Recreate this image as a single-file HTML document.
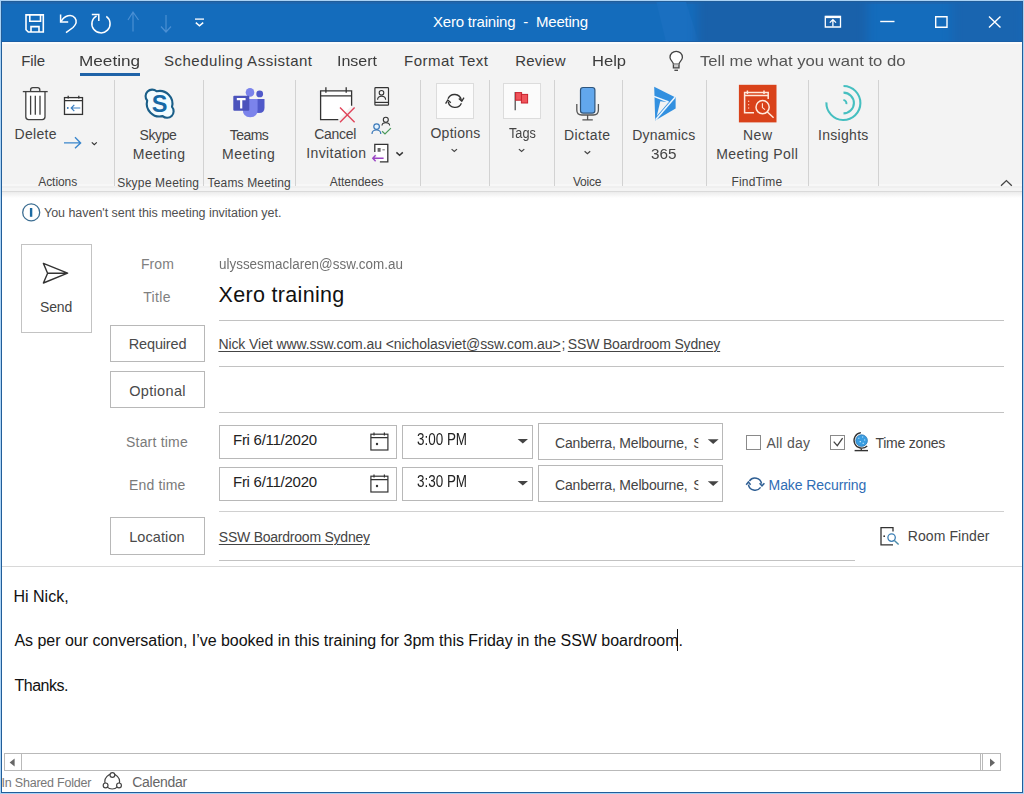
<!DOCTYPE html>
<html><head><meta charset="utf-8">
<style>
html,body{margin:0;padding:0;}
body{width:1024px;height:794px;position:relative;overflow:hidden;background:#a9d2f5;font-family:"Liberation Sans",sans-serif;}
.a{position:absolute;}
.t{position:absolute;white-space:pre;line-height:normal;font-family:"Liberation Sans",sans-serif;}
.ul{text-decoration:underline;text-underline-offset:1.5px;text-decoration-thickness:1px;}
.win{position:absolute;left:1px;top:1px;width:1022px;height:792px;box-sizing:border-box;border:1px solid #215d99;background:#fff;overflow:hidden;}
.hl{position:absolute;height:1px;background:#c2c2c2;}
.vl{position:absolute;width:1px;background:#d2d2d2;}
.box{position:absolute;box-sizing:border-box;border:1px solid #b8b8b8;background:#fff;}
svg{position:absolute;overflow:visible;}
.clip1{clip-path:inset(-5px 0 -5px 0);}
</style></head><body>
<div class="win"></div>
<!-- title bar -->
<div class="a" style="left:2px;top:2px;width:1020px;height:40px;background:#146cbc;"></div>
<div class="a" style="left:2px;top:1px;width:1020px;height:1px;background:#215d99;"></div>
<div class="a" style="left:2px;top:2px;width:1020px;height:2px;background:#1c66b0;"></div>
<div class="a" style="left:2px;top:41px;width:1020px;height:1px;background:#1a5fa6;"></div>
<div class="a" style="left:2px;top:2px;width:1020px;height:39px;overflow:hidden;">
<div class="a" style="left:652px;top:-10px;width:48px;height:60px;background:#1a6fc0;clip-path:polygon(0 0,60% 0,100% 100%,30% 100%);filter:blur(3px);"></div>
<div class="a" style="left:695px;top:-10px;width:170px;height:60px;background:#1961aa;filter:blur(5px);"></div>
<div class="a" style="left:950px;top:-10px;width:72px;height:60px;background:#1965b0;filter:blur(5px);"></div>
</div>
<div class="a" style="left:2px;top:41px;width:1020px;height:1px;background:#1a5fa6;"></div>
<!-- tab row + ribbon -->
<div class="a" style="left:2px;top:42px;width:1020px;height:149px;background:#f3f3f3;"></div>
<div class="a" style="left:2px;top:42px;width:1020px;height:2px;background:#fbfbfb;"></div>
<div class="a" style="left:2px;top:191px;width:1020px;height:1px;background:#dadada;"></div>
<div class="a" style="left:2px;top:184px;width:1020px;height:2px;background:#f7f7f7;"></div>
<div class="a" style="left:2px;top:186px;width:1020px;height:2px;background:#efefef;"></div>
<div class="a" style="left:2px;top:188px;width:1020px;height:3px;background:#f4f4f4;"></div>
<div class="a" style="left:2px;top:192px;width:1020px;height:6px;background:linear-gradient(#ececec,#ffffff);"></div>
<!-- Meeting tab underline -->
<div class="a" style="left:80px;top:73px;width:60px;height:3px;background:#1f63a8;"></div>
<!-- ribbon separators -->
<div class="vl" style="left:114px;top:80px;height:106px;"></div>
<div class="vl" style="left:203px;top:80px;height:106px;"></div>
<div class="vl" style="left:295px;top:80px;height:106px;"></div>
<div class="vl" style="left:420px;top:80px;height:106px;"></div>
<div class="vl" style="left:489px;top:80px;height:106px;"></div>
<div class="vl" style="left:554px;top:80px;height:106px;"></div>
<div class="vl" style="left:622px;top:80px;height:106px;"></div>
<div class="vl" style="left:706px;top:80px;height:106px;"></div>
<div class="vl" style="left:808px;top:80px;height:106px;"></div>
<div class="vl" style="left:878px;top:80px;height:106px;"></div>
<!-- option/tags boxes -->
<div class="box" style="left:436px;top:83px;width:38px;height:36px;border-color:#dcdcdc;background:#fbfbfb;"></div>
<div class="box" style="left:503px;top:83px;width:38px;height:36px;border-color:#dcdcdc;background:#fbfbfb;"></div>

<!-- form: send button -->
<div class="box" style="left:21px;top:244px;width:71px;height:89px;border-color:#c3c3c3;"></div>
<!-- form lines -->
<div class="hl" style="left:219px;top:320px;width:785px;"></div>
<div class="box" style="left:110px;top:325px;width:95px;height:37px;"></div>
<div class="hl" style="left:219px;top:366px;width:785px;"></div>
<div class="box" style="left:110px;top:371px;width:95px;height:37px;"></div>
<div class="hl" style="left:219px;top:412px;width:785px;"></div>
<!-- date/time boxes -->
<div class="box" style="left:219px;top:425px;width:178px;height:34px;"></div>
<div class="box" style="left:402px;top:425px;width:131px;height:34px;"></div>
<div class="box" style="left:538px;top:423px;width:185px;height:37px;"></div>
<div class="box" style="left:219px;top:467px;width:178px;height:34px;"></div>
<div class="box" style="left:402px;top:467px;width:131px;height:34px;"></div>
<div class="box" style="left:538px;top:465px;width:185px;height:37px;"></div>
<!-- checkboxes -->
<div class="box" style="left:746px;top:435px;width:15px;height:15px;border-color:#8a8a8a;"></div>
<div class="box" style="left:830px;top:435px;width:15px;height:15px;border-color:#8a8a8a;"></div>
<div class="hl" style="left:219px;top:511px;width:785px;background:#d0d0d0;"></div>
<div class="box" style="left:110px;top:517px;width:95px;height:38px;"></div>
<div class="hl" style="left:219px;top:560px;width:636px;"></div>
<div class="hl" style="left:2px;top:566px;width:1020px;background:#d8d8d8;"></div>

<!-- scrollbar -->
<div class="a" style="left:4px;top:753px;width:997px;height:18px;box-sizing:border-box;border:1px solid #b9b9b9;background:#fff;"></div>
<div class="a" style="left:21px;top:753px;width:1px;height:18px;background:#b9b9b9;"></div>
<div class="a" style="left:980px;top:753px;width:1px;height:18px;background:#b9b9b9;"></div>
<div class="a" style="left:982px;top:753px;width:1px;height:18px;background:#b9b9b9;"></div>


<!-- QAT icons -->
<svg width="1024" height="45" style="left:0;top:0" fill="none" stroke="#fff" stroke-width="1.6">
 <path d="M26 14.9 H43.3 V32 H28.3 L26 29.7 Z"/>
 <path d="M29.8 14.9 V21.3 H40.5 V14.9"/>
 <path d="M31 32 V26.6 H39 V32"/>
 <path d="M60.6 14.6 V22 H68.2" stroke-width="1.5"/>
 <path d="M61.2 21.4 C 64.5 15.5, 71.5 13.5, 75 18 C 77.5 21.5, 75.5 25, 73 27.5 L 66 32.6" stroke-width="1.5"/>
 <path d="M106.3 16.4 A 9.1 9.1 0 1 1 96.6 15.8" stroke-width="1.5"/>
 <path d="M91.8 14.4 H98.8 V21" stroke-width="1.5"/>
 <g stroke="#4a8fd3" stroke-width="1.2"><path d="M133 12 V31.5 M128 20 L133 12 L138.5 20"/><path d="M166 15 V32 M161 26.5 L166 32 L171 26.5"/></g>
 <path d="M195 19.1 H204" stroke-width="1.3"/>
 <path d="M195.8 22.6 L199.5 25.8 L203.2 22.6" stroke-width="1.5"/>
 <!-- window controls -->
 <path d="M825.3 16.3 H840.5 V27 H825.3 Z" stroke-width="1.3"/>
 <path d="M825.3 17 H840.5" stroke-width="2.2"/>
 <path d="M832.9 26.5 V20 M829.8 22.6 L832.9 19.6 L836 22.6" stroke-width="1.3"/>
 <path d="M880.2 21.5 H894.5" stroke-width="1.4"/>
 <path d="M935.7 16.7 H947 V27.3 H935.7 Z" stroke-width="1.4"/>
 <path d="M989 16.5 L1000.5 27.5 M1000.5 16.5 L989 27.5" stroke-width="1.4"/>
</svg>


<!-- ribbon icons -->
<svg width="1024" height="200" style="left:0;top:0" fill="none" stroke="#404040" stroke-width="1.3">
 <!-- trash -->
 <path d="M25.8 91.6 V116.8 Q25.8 119.6 28.6 119.6 H42.2 Q45 119.6 45 116.8 V91.6" fill="#fff"/>
 <path d="M22.8 91.6 H47.7"/>
 <path d="M30.6 91.6 V89.8 Q30.6 87.6 32.8 87.6 H37.6 Q39.8 87.6 39.8 89.8 V91.6"/>
 <path d="M30.6 95.8 V114.8 M35.3 95.8 V114.8 M40 95.8 V114.8"/>
 <!-- calendar back -->
 <rect x="64.5" y="97.6" width="18" height="16.8" fill="#fff" stroke="#333"/>
 <path d="M64.5 100.6 H82.5 M68.2 95.8 V98.6 M78.8 95.8 V98.6" stroke="#333"/>
 <circle cx="67.8" cy="108" r="0.9" fill="#2f6fb0" stroke="none"/>
 <path d="M71.2 108 H80.3 M74.3 104.8 L71.2 108 L74.3 111.2" stroke="#3c7fc1" stroke-width="1.2"/>
 <!-- forward arrow -->
 <path d="M64 142.9 H80.4 M75 137.3 L80.6 142.9 L75 148.3" stroke="#3a86cc" stroke-width="1.4"/>
 <path d="M91.8 142.4 L94.3 144.6 L96.8 142.4" stroke="#333" stroke-width="1.2"/>
 <!-- skype -->
 <path d="M156.57 91.26 A 12.8 12.8 0 0 1 172 106.88 A 6.6 6.6 0 0 1 162.63 116.14 A 12.8 12.8 0 0 1 147.2 100.52 A 6.6 6.6 0 0 1 156.57 91.26 Z" fill="#f2fcff" stroke="#1a5e88" stroke-width="2.1" stroke-linejoin="round"/>
 <text x="159.7" y="111.6" text-anchor="middle" font-family="Liberation Sans" font-weight="bold" font-size="23.5" fill="#1569a6" stroke="none">S</text>
 <!-- teams -->
 <path d="M252 99 H264.5 V108 Q264.5 113 259 113 Q252 113 252 108 Z" fill="#5059c9" stroke="none"/>
 <circle cx="259.7" cy="93.9" r="3.4" fill="#5059c9" stroke="none"/>
 <path d="M242.8 99 H257.6 V109.6 Q257.6 117.2 250.2 117.2 Q242.8 117.2 242.8 109.6 Z" fill="#7b83eb" stroke="none"/>
 <circle cx="250" cy="92.4" r="4.3" fill="#7b83eb" stroke="none"/>
 <rect x="233.3" y="95.8" width="16" height="15" rx="1" fill="#4b53bc" stroke="none"/>
 <path d="M236.8 99.1 H245.6 M241.2 99.1 V108.6" stroke="#fff" stroke-width="2.2"/>
 <!-- cancel invitation -->
 <path d="M338.3 119.7 H320.6 V90.8 H351.6 V105.8" fill="#fff" stroke="#333"/>
 <path d="M320.6 95.9 H351.6 M325.9 87.2 V92.8 M346.2 87.2 V92.8" stroke="#333"/>
 <path d="M340 107.6 L354.6 122.3 M354.6 107.6 L340 122.3" stroke="#e0445a" stroke-width="1.4"/>
 <!-- address book -->
 <rect x="374.9" y="87.6" width="13.6" height="17.6" rx="0.8" stroke="#333" stroke-width="1.2"/>
 <path d="M374.9 102.4 H388.5" stroke="#333" stroke-width="1.2"/>
 <circle cx="381.5" cy="92.8" r="2.3" stroke="#333" stroke-width="1.1"/>
 <path d="M377.6 99.8 Q377.6 96.2 381.6 96.2 Q385.6 96.2 385.6 99.8" stroke="#333" stroke-width="1.1"/>
 <!-- check names -->
 <circle cx="385.8" cy="119.8" r="2.5" stroke="#333" stroke-width="1.1"/>
 <path d="M382 125.6 Q382 122.8 385.8 122.8 Q389.6 122.8 389.6 125.6" stroke="#333" stroke-width="1.1"/>
 <circle cx="376.6" cy="126.6" r="2.8" stroke="#3a78b8" stroke-width="1.2" fill="#e4f3ff"/>
 <path d="M372 134 Q372 130 376.4 130 Q380.8 130 380.8 134" stroke="#3a78b8" stroke-width="1.2"/>
 <path d="M382.1 131.2 L385 134 L390.9 128.1" stroke="#4a9a5a" stroke-width="1.2"/>
 <!-- response -->
 <path d="M374.8 152 V144.3 H387.8 V161.8 H379.9" stroke="#333" stroke-width="1.3" fill="#fff"/>
 <rect x="377.6" y="148" width="3" height="3.8" fill="#666" stroke="none"/>
 <path d="M382.4 149.8 H384.8" stroke="#888" stroke-width="1.2"/>
 <path d="M373 158.2 H383.6 M375.6 155.2 L372.8 158.2 L375.6 161.2" stroke="#9a44c4" stroke-width="1.4"/>
 <path d="M396.4 152.4 L399.6 155.2 L402.8 152.4" stroke="#333" stroke-width="1.5"/>
 <!-- options icon -->
 <path d="M448 98.8 A 7 7 0 0 1 461.3 100" stroke="#333" stroke-width="1.3"/>
 <path d="M461.4 103.2 A 7 7 0 0 1 448.2 102" stroke="#333" stroke-width="1.3"/>
 <path d="M458.8 98.4 L461.8 101.2 L464 97.6" stroke="#333" stroke-width="1.3"/>
 <path d="M450.8 102.8 L447.8 100 L445.6 103.6" stroke="#333" stroke-width="1.3"/>
 <path d="M451.6 149.1 L454.3 151.5 L457 149.1" stroke="#444" stroke-width="1.2"/>
 <!-- flag -->
 <path d="M515.2 92 V110.2" stroke="#444" stroke-width="1.2"/>
 <rect x="515.6" y="92.6" width="6" height="7.6" fill="#f0545b" stroke="#c8232e" stroke-width="1"/>
 <rect x="521.4" y="94.4" width="6.2" height="8.6" fill="#f0545b" stroke="#c8232e" stroke-width="1"/>
 <path d="M518.9 149.1 L521.6 151.5 L524.3 149.1" stroke="#444" stroke-width="1.2"/>
 <!-- mic -->
 <rect x="580.5" y="87.5" width="14.4" height="25.6" rx="2.6" fill="#62a7ec" stroke="#2e557c" stroke-width="1.2"/>
 <path d="M576.8 104 V110 Q576.8 115 581.8 115 H593.4 Q598.4 115 598.4 110 V104" stroke="#555" stroke-width="1.3"/>
 <path d="M587.6 115 V119.6 M582.4 119.8 H592.8" stroke="#555" stroke-width="1.3"/>
 <path d="M584.6 151.2 L587.4 153.8 L590.2 151.2" stroke="#444" stroke-width="1.2"/>
 <!-- dynamics -->
 <path d="M654.2 86.8 L675.6 97.4 V108.6 L655.2 120.6 Z" fill="#3290e0" stroke="none"/>
 <path d="M660.3 101.3 L668.6 102.2 L656.8 116 Z" fill="#f3f3f3" stroke="none"/>
 <path d="M654 96.4 L668.6 102" stroke="#eef7ff" stroke-width="1.5"/>
 <path d="M675 97.2 L655.6 119.8" stroke="#eef7ff" stroke-width="1.5"/>
 <!-- findtime -->
 <rect x="738.9" y="84.8" width="37.6" height="37.6" fill="#d9421a" stroke="none"/>
 <path d="M754 112.8 H744.6 V92.6 H768.2 V99" stroke="#ffe9dc" stroke-width="1.5"/>
 <path d="M744.6 95.4 H768.2 M747.4 90.6 V94 M764 90.6 V94" stroke="#ffe9dc" stroke-width="1.5"/>
 <path d="M748.6 100.8 V101.8 M748.6 104.2 V105.2 M748.6 107.6 V108.6" stroke="#ffe9dc" stroke-width="1.2"/>
 <circle cx="762.6" cy="107.2" r="6.6" stroke="#ffe9dc" stroke-width="1.5" fill="#d9421a"/>
 <path d="M767.4 112 L773.6 117.8" stroke="#ffe9dc" stroke-width="1.5"/>
 <path d="M762.4 103.2 V107.6 L765 109.6" stroke="#ffe9dc" stroke-width="1.1"/>
 <!-- insights -->
 <path d="M843.5 86 A 17 17 0 1 1 826.4 102.4" stroke="#45bfc0" stroke-width="2.1"/>
 <path d="M843.5 92.6 A 10.4 10.4 0 0 1 843.5 113.4" stroke="#45bfc0" stroke-width="2.1"/>
 <path d="M843.4 99.8 A 4 4 0 0 1 846.4 104.2" stroke="#45bfc0" stroke-width="1.9"/>
 <!-- collapse chevron -->
 <path d="M1001 185.8 L1006.4 180.6 L1011.8 185.8" stroke="#444" stroke-width="1.3"/>
 <!-- lightbulb -->
 <path d="M673.4 64.2 C 673.4 61.8, 670 60.2, 670 57.4 C 670 53.9, 672.8 51.4, 676.2 51.4 C 679.6 51.4, 682.4 53.9, 682.4 57.4 C 682.4 60.2, 679 61.8, 679 64.2 Z" stroke="#444" stroke-width="1.3" fill="#fff"/>
 <path d="M673.4 64.4 V67.8 H679 V64.4" stroke="#444" stroke-width="1.3" fill="#ccc"/>
 <path d="M674.4 70.3 H678" stroke="#444" stroke-width="1.3"/>
</svg>


<!-- form icons -->
<svg width="1024" height="794" style="left:0;top:0" fill="none" stroke="#333" stroke-width="1.3">
 <!-- info -->
 <circle cx="31.2" cy="212.4" r="8.5" stroke="#3d6e92" stroke-width="1.3"/>
 <path d="M31.1 208 V216.8" stroke="#1c6ba3" stroke-width="2.4"/>
 <!-- send -->
 <path d="M43.4 263.4 L67.6 273.2 L43.4 283 L47.6 273.2 Z M47.6 273.2 H67.6" stroke="#333" stroke-width="1.4" stroke-linejoin="round"/>
 <!-- date calendars -->
 <g id="cal1">
 <rect x="370.9" y="434.2" width="17" height="15.8" stroke="#333" stroke-width="1.2"/>
 <path d="M370.9 437.6 H387.9 M374 432.6 V435.6 M384.4 432.6 V435.6" stroke="#333" stroke-width="1.2"/>
 <circle cx="377" cy="444" r="1.2" fill="#333" stroke="none"/>
 </g>
 <use href="#cal1" y="42"/>
 <!-- dropdown triangles -->
 <path d="M517.6 439 H528 L522.8 443.6 Z" fill="#444" stroke="none"/>
 <path d="M517.6 481 H528 L522.8 485.6 Z" fill="#444" stroke="none"/>
 <path d="M707.8 439.3 H718.6 L713.2 444.1 Z" fill="#444" stroke="none"/>
 <path d="M707.8 481.3 H718.6 L713.2 486.1 Z" fill="#444" stroke="none"/>
 <!-- check -->
 <path d="M833.7 441.6 L837.3 445.6 L842.6 438.1" stroke="#444" stroke-width="1.3"/>
 <!-- globe -->
 <circle cx="861.6" cy="440.6" r="5.8" fill="#3a9de0" stroke="#2a78b8" stroke-width="0.8"/>
 <path d="M858.2 438.2 h1.2 M862 437 h1.2 M864 440 h1.2 M859.6 441.6 h1.4 M862.6 443.4 h1.2" stroke="#bfe6ff" stroke-width="1.1"/>
 <path d="M860.9 432.6 A 7.8 7.8 0 1 0 867.2 446" stroke="#333" stroke-width="1.3"/>
 <path d="M861.3 448.4 V450.4" stroke="#333" stroke-width="1.3"/>
 <path d="M854.6 450.6 H868" stroke="#333" stroke-width="1.4"/>
 <!-- recurring -->
 <path d="M749.4 481 A 6.8 6.8 0 0 1 761.6 483.6" stroke="#2f5f94" stroke-width="1.5"/>
 <path d="M760.6 487.4 A 6.8 6.8 0 0 1 748.4 484.6" stroke="#2f5f94" stroke-width="1.5"/>
 <path d="M759.6 483.2 L762 485.8 L764.4 483.2" stroke="#2f5f94" stroke-width="1.5"/>
 <path d="M746.2 484.8 L748.4 482 L750.6 484.8" stroke="#2f5f94" stroke-width="1.5"/>
 <!-- room finder -->
 <path d="M893 531.4 V527.6 H881 V544.8 H893" stroke="#333" stroke-width="1.3"/>
 <circle cx="884.2" cy="536.2" r="0.9" fill="#333" stroke="none"/>
 <circle cx="891.6" cy="537.6" r="3.7" stroke="#3c7fb5" stroke-width="1.3"/>
 <path d="M894.4 540.4 L898.6 544.6" stroke="#4a8aa8" stroke-width="1.4"/>
 <!-- scrollbar arrows -->
 <path d="M14.6 758.6 V766.4 L9.6 762.5 Z" fill="#666" stroke="none"/>
 <path d="M990 758.6 V766.8 L995 762.7 Z" fill="#666" stroke="none"/>
 <!-- share icon -->
 <circle cx="112.2" cy="781.6" r="7.4" stroke="#444" stroke-width="1.2"/>
 <circle cx="112.4" cy="775" r="2.4" fill="#fff" stroke="#444" stroke-width="1.2"/>
 <circle cx="105.6" cy="785.4" r="2.4" fill="#fff" stroke="#444" stroke-width="1.2"/>
 <circle cx="119" cy="785.4" r="2.4" fill="#fff" stroke="#444" stroke-width="1.2"/>
 <!-- caret -->
 <path d="M677.5 629 V651" stroke="#111" stroke-width="1"/>
</svg>

<!--ICONS-->

<span id="t0" class="t " style="left:433.00px;top:13.00px;font-size:15px;color:#ffffff;letter-spacing:-0.208px;">Xero training  -  Meeting</span>
<span id="t1" class="t " style="left:21.20px;top:51.80px;font-size:15px;color:#3b3b3b;letter-spacing:-0.067px;">File</span>
<span id="t2" class="t sx" style="left:78.80px;top:51.80px;font-size:15px;color:#3b3b3b;letter-spacing:0.000px;transform:scaleX(1.1446);transform-origin:0 0;">Meeting</span>
<span id="t3" class="t " style="left:164.00px;top:51.80px;font-size:15px;color:#3b3b3b;letter-spacing:0.505px;">Scheduling Assistant</span>
<span id="t4" class="t sx" style="left:337.20px;top:51.80px;font-size:15px;color:#3b3b3b;letter-spacing:0.000px;transform:scaleX(1.0679);transform-origin:0 0;">Insert</span>
<span id="t5" class="t " style="left:404.00px;top:51.80px;font-size:15px;color:#3b3b3b;letter-spacing:0.500px;">Format Text</span>
<span id="t6" class="t " style="left:515.20px;top:51.80px;font-size:15px;color:#3b3b3b;letter-spacing:0.220px;">Review</span>
<span id="t7" class="t sx" style="left:592.00px;top:51.80px;font-size:15px;color:#3b3b3b;letter-spacing:0.000px;transform:scaleX(1.1034);transform-origin:0 0;">Help</span>
<span id="t8" class="t sx" style="left:700.40px;top:51.80px;font-size:15px;color:#555555;letter-spacing:0.000px;transform:scaleX(1.1098);transform-origin:0 0;">Tell me what you want to do</span>
<span id="t9" class="t " style="left:14.60px;top:126.40px;font-size:14px;color:#444444;letter-spacing:0.300px;">Delete</span>
<span id="t10" class="t " style="left:139.40px;top:127.30px;font-size:14px;color:#444444;letter-spacing:-0.350px;">Skype</span>
<span id="t11" class="t " style="left:132.80px;top:145.80px;font-size:14px;color:#444444;letter-spacing:0.417px;">Meeting</span>
<span id="t12" class="t " style="left:229.80px;top:127.30px;font-size:14px;color:#444444;letter-spacing:-0.575px;">Teams</span>
<span id="t13" class="t " style="left:222.00px;top:145.80px;font-size:14px;color:#444444;letter-spacing:0.500px;">Meeting</span>
<span id="t14" class="t " style="left:314.20px;top:126.40px;font-size:14px;color:#444444;letter-spacing:-0.300px;">Cancel</span>
<span id="t15" class="t " style="left:306.20px;top:145.20px;font-size:14px;color:#444444;letter-spacing:0.411px;">Invitation</span>
<span id="t16" class="t " style="left:430.40px;top:125.00px;font-size:14px;color:#444444;letter-spacing:0.283px;">Options</span>
<span id="t17" class="t sx" style="left:508.80px;top:125.00px;font-size:14px;color:#444444;letter-spacing:0.000px;transform:scaleX(0.9083);transform-origin:0 0;">Tags</span>
<span id="t18" class="t " style="left:564.00px;top:127.00px;font-size:14px;color:#444444;letter-spacing:0.417px;">Dictate</span>
<span id="t19" class="t " style="left:632.20px;top:127.00px;font-size:14px;color:#444444;letter-spacing:0.229px;">Dynamics</span>
<span id="t20" class="t sx" style="left:651.00px;top:146.00px;font-size:14px;color:#444444;letter-spacing:0.000px;transform:scaleX(1.0909);transform-origin:0 0;">365</span>
<span id="t21" class="t " style="left:743.00px;top:127.00px;font-size:14px;color:#444444;letter-spacing:0.500px;">New</span>
<span id="t22" class="t " style="left:716.20px;top:146.00px;font-size:14px;color:#444444;letter-spacing:0.427px;">Meeting Poll</span>
<span id="t23" class="t " style="left:818.00px;top:127.00px;font-size:14px;color:#444444;letter-spacing:0.300px;">Insights</span>
<span id="t24" class="t " style="left:38.20px;top:174.80px;font-size:12px;color:#444444;letter-spacing:-0.050px;">Actions</span>
<span id="t25" class="t " style="left:117.20px;top:175.50px;font-size:12px;color:#444444;letter-spacing:0.200px;">Skype Meeting</span>
<span id="t26" class="t " style="left:207.60px;top:175.50px;font-size:12px;color:#444444;letter-spacing:0.150px;">Teams Meeting</span>
<span id="t27" class="t " style="left:329.80px;top:174.50px;font-size:12px;color:#444444;letter-spacing:-0.037px;">Attendees</span>
<span id="t28" class="t " style="left:573.00px;top:174.70px;font-size:12px;color:#444444;letter-spacing:-0.250px;">Voice</span>
<span id="t29" class="t " style="left:731.60px;top:174.50px;font-size:12px;color:#444444;letter-spacing:0.129px;">FindTime</span>
<span id="t30" class="t " style="left:44.00px;top:206.00px;font-size:12.5px;color:#505050;letter-spacing:-0.034px;">You haven't sent this meeting invitation yet.</span>
<span id="t31" class="t " style="left:40.00px;top:299.40px;font-size:14px;color:#444444;letter-spacing:-0.167px;">Send</span>
<span id="t32" class="t " style="left:141.00px;top:255.70px;font-size:14px;color:#808080;letter-spacing:0.067px;">From</span>
<span id="t33" class="t sx" style="left:218.60px;top:255.70px;font-size:14px;color:#707070;letter-spacing:0.000px;transform:scaleX(0.9600);transform-origin:0 0;">ulyssesmaclaren@ssw.com.au</span>
<span id="t34" class="t " style="left:143.20px;top:289.30px;font-size:14px;color:#808080;letter-spacing:0.375px;">Title</span>
<span id="t35" class="t " style="left:218.60px;top:282.50px;font-size:21.5px;color:#111111;letter-spacing:0.317px;">Xero training</span>
<span id="t36" class="t " style="left:128.80px;top:336.40px;font-size:14.5px;color:#4a4a4a;letter-spacing:-0.171px;">Required</span>
<span id="t37" class="t ul" style="left:218.40px;top:335.80px;font-size:14px;color:#444444;letter-spacing:-0.080px;">Nick Viet www.ssw.com.au &lt;nicholasviet@ssw.com.au&gt;</span>
<span id="t38" class="t nofit" style="left:561.60px;top:335.80px;font-size:14px;color:#444444;letter-spacing:0.000px;">;</span>
<span id="t39" class="t ul" style="left:567.80px;top:335.80px;font-size:14px;color:#444444;letter-spacing:-0.163px;">SSW Boardroom Sydney</span>
<span id="t40" class="t " style="left:129.20px;top:382.60px;font-size:14.5px;color:#4a4a4a;letter-spacing:0.329px;">Optional</span>
<span id="t41" class="t " style="left:126.00px;top:434.20px;font-size:14px;color:#7a7a7a;letter-spacing:0.200px;">Start time</span>
<span id="t42" class="t " style="left:233.00px;top:430.90px;font-size:15px;color:#222222;letter-spacing:-0.267px;">Fri 6/11/2020</span>
<span id="t43" class="t sx" style="left:416.80px;top:430.90px;font-size:16px;color:#222222;letter-spacing:0.000px;transform:scaleX(0.8403);transform-origin:0 0;">3:00 PM</span>
<span id="t44" class="t " style="left:555.00px;top:434.50px;font-size:14px;color:#444444;letter-spacing:-0.184px;">Canberra, Melbourne,</span>
<span id="t45" class="t nofit" style="left:693.20px;top:434.50px;font-size:14px;color:#444444;letter-spacing:0.000px;clip-path:inset(-5px 45% -5px -5px);">S</span>
<span id="t46" class="t " style="left:766.40px;top:435.20px;font-size:14px;color:#555555;letter-spacing:0.267px;">All day</span>
<span id="t47" class="t " style="left:875.40px;top:435.20px;font-size:14px;color:#444444;letter-spacing:-0.211px;">Time zones</span>
<span id="t48" class="t " style="left:129.00px;top:476.70px;font-size:14px;color:#7a7a7a;letter-spacing:0.157px;">End time</span>
<span id="t49" class="t " style="left:233.00px;top:472.80px;font-size:15px;color:#222222;letter-spacing:-0.267px;">Fri 6/11/2020</span>
<span id="t50" class="t sx" style="left:416.80px;top:472.90px;font-size:16px;color:#222222;letter-spacing:0.000px;transform:scaleX(0.8403);transform-origin:0 0;">3:30 PM</span>
<span id="t51" class="t " style="left:555.00px;top:476.70px;font-size:14px;color:#444444;letter-spacing:-0.184px;">Canberra, Melbourne,</span>
<span id="t52" class="t nofit" style="left:693.20px;top:476.70px;font-size:14px;color:#444444;letter-spacing:0.000px;clip-path:inset(-5px 45% -5px -5px);">S</span>
<span id="t53" class="t " style="left:768.60px;top:477.00px;font-size:14px;color:#2f6db5;letter-spacing:-0.085px;">Make Recurring</span>
<span id="t54" class="t " style="left:129.20px;top:529.20px;font-size:14.5px;color:#4a4a4a;letter-spacing:0.086px;">Location</span>
<span id="t55" class="t ul" style="left:218.80px;top:529.20px;font-size:14px;color:#444444;letter-spacing:-0.232px;">SSW Boardroom Sydney</span>
<span id="t56" class="t " style="left:907.80px;top:528.40px;font-size:14px;color:#444444;letter-spacing:0.070px;">Room Finder</span>
<span id="t57" class="t " style="left:13.40px;top:587.60px;font-size:16px;color:#111111;letter-spacing:0.029px;">Hi Nick,</span>
<span id="t58" class="t " style="left:14.40px;top:631.80px;font-size:16px;color:#111111;letter-spacing:-0.021px;">As per our conversation, I’ve booked in this training for 3pm this Friday in the SSW boardroom.</span>
<span id="t59" class="t " style="left:14.40px;top:676.80px;font-size:16px;color:#111111;letter-spacing:-0.467px;">Thanks.</span>
<span id="t60" class="t " style="left:1.60px;top:775.90px;font-size:12.5px;color:#777777;letter-spacing:-0.220px;">In Shared Folder</span>
<span id="t61" class="t " style="left:132.20px;top:773.90px;font-size:14px;color:#666666;letter-spacing:-0.271px;">Calendar</span>
</body></html>
